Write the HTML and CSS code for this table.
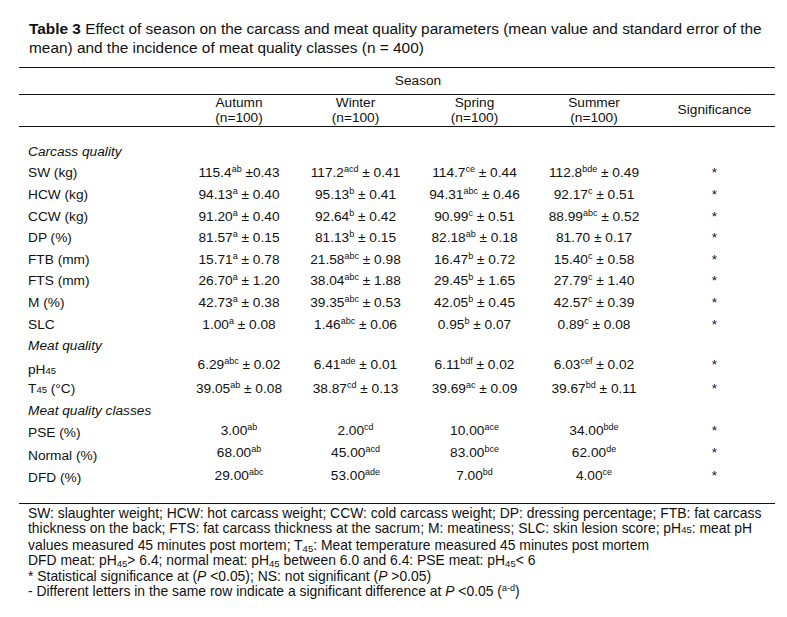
FILE: index.html
```html
<!DOCTYPE html>
<html>
<head>
<meta charset="utf-8">
<link rel="stylesheet" href="styles.css">
</head>
<body>
<div class="page">
  <p class="caption"><b>Table 3</b> Effect of season on the carcass and meat quality parameters (mean value and standard error of the<br>mean) and the incidence of meat quality classes (n = 400)</p>
  <table class="data">
    <colgroup>
      <col class="c-label"><col class="c-aut"><col class="c-win"><col class="c-spr"><col class="c-sum"><col class="c-sig">
    </colgroup>
    <thead>
      <tr class="season-row"><th></th><th colspan="4">Season</th><th></th></tr>
      <tr class="head-row"><th></th><th>Autumn<br>(n=100)</th><th>Winter<br>(n=100)</th><th>Spring<br>(n=100)</th><th>Summer<br>(n=100)</th><th>Significance</th></tr>
    </thead>
    <tbody>
      <tr class="section first"><td colspan="6">Carcass quality</td></tr>
      <tr><td>SW (kg)</td><td>115.4<sup>ab</sup> ±0.43</td><td>117.2<sup>acd</sup> ± 0.41</td><td>114.7<sup>ce</sup> ± 0.44</td><td>112.8<sup>bde</sup> ± 0.49</td><td>*</td></tr>
      <tr><td>HCW (kg)</td><td>94.13<sup>a</sup> ± 0.40</td><td>95.13<sup>b</sup> ± 0.41</td><td>94.31<sup>abc</sup> ± 0.46</td><td>92.17<sup>c</sup> ± 0.51</td><td>*</td></tr>
      <tr><td>CCW (kg)</td><td>91.20<sup>a</sup> ± 0.40</td><td>92.64<sup>b</sup> ± 0.42</td><td>90.99<sup>c</sup> ± 0.51</td><td>88.99<sup>abc</sup> ± 0.52</td><td>*</td></tr>
      <tr><td>DP (%)</td><td>81.57<sup>a</sup> ± 0.15</td><td>81.13<sup>b</sup> ± 0.15</td><td>82.18<sup>ab</sup> ± 0.18</td><td>81.70 ± 0.17</td><td>*</td></tr>
      <tr><td>FTB (mm)</td><td>15.71<sup>a</sup> ± 0.78</td><td>21.58<sup>abc</sup> ± 0.98</td><td>16.47<sup>b</sup> ± 0.72</td><td>15.40<sup>c</sup> ± 0.58</td><td>*</td></tr>
      <tr><td>FTS (mm)</td><td>26.70<sup>a</sup> ± 1.20</td><td>38.04<sup>abc</sup> ± 1.88</td><td>29.45<sup>b</sup> ± 1.65</td><td>27.79<sup>c</sup> ± 1.40</td><td>*</td></tr>
      <tr><td>M (%)</td><td>42.73<sup>a</sup> ± 0.38</td><td>39.35<sup>abc</sup> ± 0.53</td><td>42.05<sup>b</sup> ± 0.45</td><td>42.57<sup>c</sup> ± 0.39</td><td>*</td></tr>
      <tr><td>SLC</td><td>1.00<sup>a</sup> ± 0.08</td><td>1.46<sup>abc</sup> ± 0.06</td><td>0.95<sup>b</sup> ± 0.07</td><td>0.89<sup>c</sup> ± 0.08</td><td>*</td></tr>
      <tr class="section"><td colspan="6">Meat quality</td></tr>
      <tr class="ph"><td>pH<span class="small">45</span></td><td>6.29<sup>abc</sup> ± 0.02</td><td>6.41<sup>ade</sup> ± 0.01</td><td>6.11<sup>bdf</sup> ± 0.02</td><td>6.03<sup>cef</sup> ± 0.02</td><td>*</td></tr>
      <tr><td>T<span class="small">45</span> (°C)</td><td>39.05<sup>ab</sup> ± 0.08</td><td>38.87<sup>cd</sup> ± 0.13</td><td>39.69<sup>ac</sup> ± 0.09</td><td>39.67<sup>bd</sup> ± 0.11</td><td>*</td></tr>
      <tr class="section"><td colspan="6">Meat quality classes</td></tr>
      <tr class="cls"><td>PSE (%)</td><td>3.00<sup>ab</sup></td><td>2.00<sup>cd</sup></td><td>10.00<sup>ace</sup></td><td>34.00<sup>bde</sup></td><td>*</td></tr>
      <tr class="cls"><td>Normal (%)</td><td>68.00<sup>ab</sup></td><td>45.00<sup>acd</sup></td><td>83.00<sup>bce</sup></td><td>62.00<sup>de</sup></td><td>*</td></tr>
      <tr class="cls"><td>DFD (%)</td><td>29.00<sup>abc</sup></td><td>53.00<sup>ade</sup></td><td>7.00<sup>bd</sup></td><td>4.00<sup>ce</sup></td><td>*</td></tr>
    </tbody>
  </table>
  <div class="notes">
    <p>SW: slaughter weight; HCW: hot carcass weight; CCW: cold carcass weight; DP: dressing percentage; FTB: fat carcass<br>thickness on the back; FTS: fat carcass thickness at the sacrum; M: meatiness; SLC: skin lesion score; pH<span class="small">45</span>: meat pH<br>values measured 45 minutes post mortem; T<span class="low">45</span>: Meat temperature measured 45 minutes post mortem</p>
    <p>DFD meat: pH<span class="low">45</span>&gt; 6.4; normal meat: pH<span class="low">45</span> between 6.0 and 6.4: PSE meat: pH<span class="low">45</span>&lt; 6</p>
    <p>* Statistical significance at (<i>P</i> &lt;0.05); NS: not significant (<i>P</i> &gt;0.05)</p>
    <p>- Different letters in the same row indicate a significant difference at <i>P</i> &lt;0.05 (<sup>a-d</sup>)</p>
  </div>
</div>
</body>
</html>
```

FILE: styles.css
```css
html, body {
  margin: 0;
  padding: 0;
  background: #ffffff;
}
body {
  font-family: "Liberation Sans", Arial, sans-serif;
  color: #111;
}
.page {
  padding: 19px 12px 0 19px;
}
.caption {
  margin: 0 0 10px 0;
  padding-left: 10px;
  font-size: 15.4px;
  line-height: 19px;
}
.caption b {
  font-weight: bold;
}
.data {
  width: 756px;
  border-collapse: collapse;
  table-layout: fixed;
  font-size: 13.7px;
}
.c-label { width: 163px; }
.c-aut { width: 114px; }
.c-win { width: 119px; }
.c-spr { width: 119px; }
.c-sum { width: 120px; }
.c-sig { width: 121px; }
.data th {
  font-weight: normal;
  padding: 0;
  text-align: center;
}
.season-row th {
  border-top: 1px solid #111;
  border-bottom: 1px solid #111;
  height: 26px;
  line-height: 16px;
}
.head-row th {
  border-bottom: 1px solid #111;
  height: 31px;
  line-height: 14.5px;
}
.data td {
  padding: 0;
  height: 21.6px;
  line-height: 16px;
  text-align: center;
  white-space: nowrap;
}
.data td:first-child {
  text-align: left;
  padding-left: 9px;
}
.section td {
  font-style: italic;
}
.first td {
  padding-top: 14px;
}
.cls td {
  vertical-align: top;
  padding-top: 1px;
}
.cls td:first-child {
  vertical-align: middle;
  padding-top: 0;
}
.ph td {
  vertical-align: top;
}
.ph td:first-child {
  vertical-align: bottom;
}
sup {
  font-size: 9px;
  line-height: 0;
  vertical-align: 5px;
}
.small {
  font-size: 9.5px;
}
.low {
  font-size: 9.5px;
  vertical-align: -2px;
  line-height: 0;
}
.notes {
  width: 756px;
  margin-top: 13px;
  border-top: 1px solid #111;
  padding-top: 2px;
  font-size: 13.9px;
  line-height: 15.6px;
}
.notes p {
  margin: 0;
  padding-left: 9px;
  white-space: nowrap;
}
```
